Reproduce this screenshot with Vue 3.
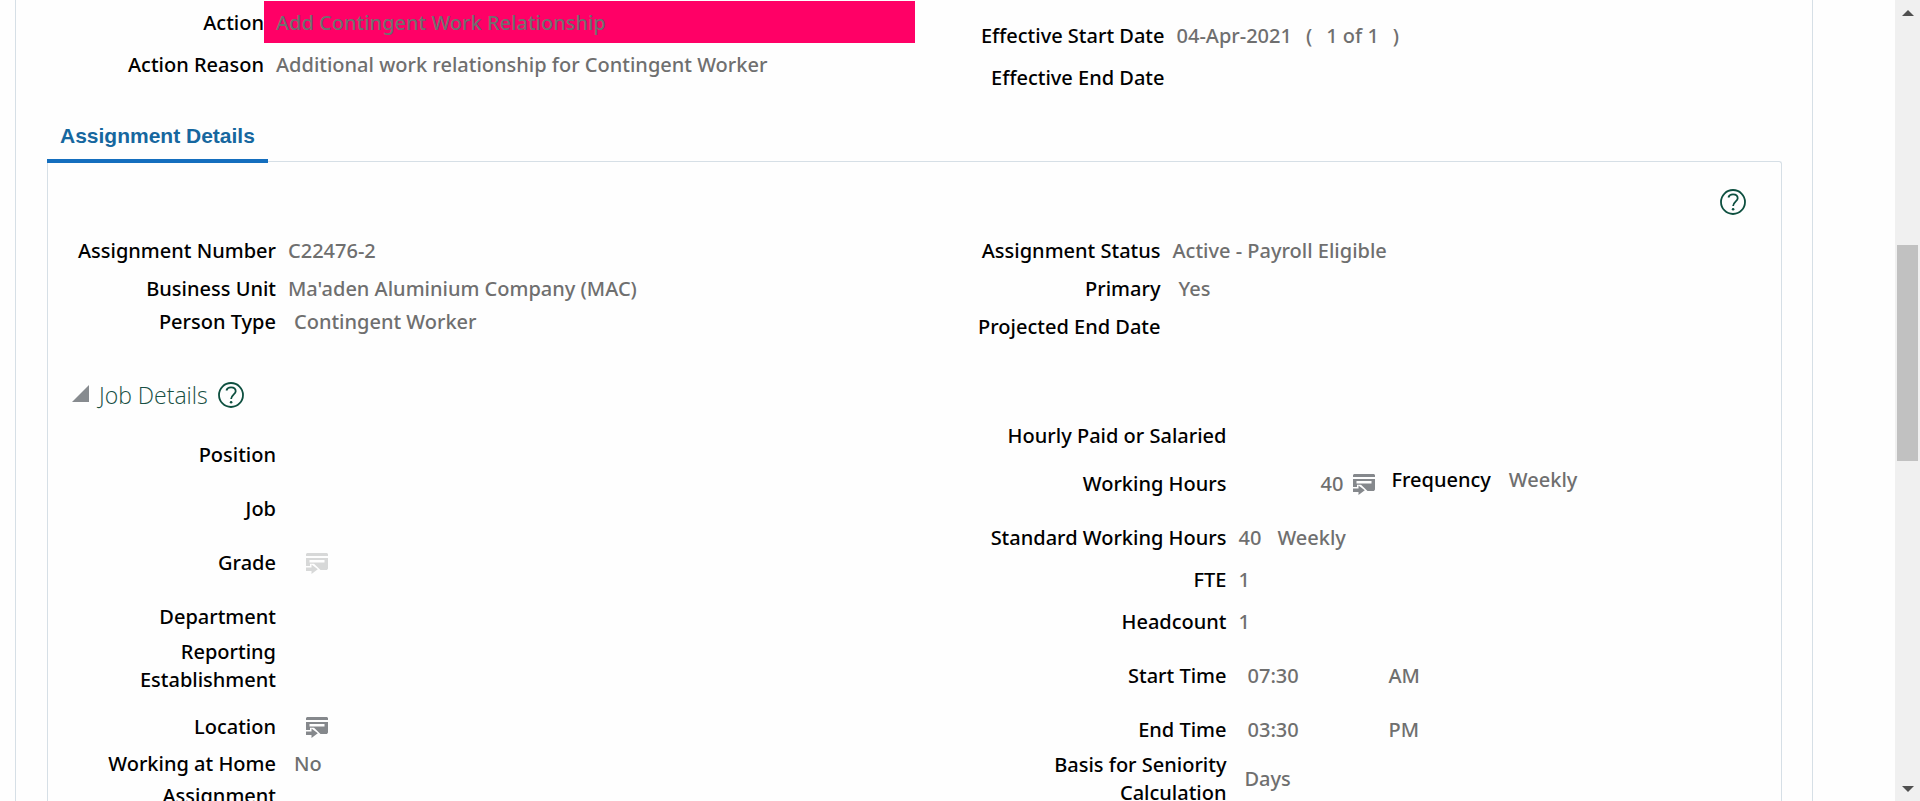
<script setup>
import { ref, h } from 'vue'

const expanded = ref(true)
const thumb = { top: 29.3, height: 28.8 }

const actionRows = [
  { label: 'Action', value: 'Add Contingent Work Relationship', marked: true },
  { label: 'Action Reason', value: 'Additional work relationship for Contingent Worker' },
]

const assignmentLeft = [
  { label: 'Assignment Number', value: 'C22476-2', size: 'normal' },
  { label: 'Business Unit', value: "Ma'aden Aluminium Company (MAC)", size: 'normal' },
  { label: 'Person Type', value: 'Contingent Worker', size: 'compact', inset: true },
]

const assignmentRight = [
  { label: 'Assignment Status', value: 'Active - Payroll Eligible' },
  { label: 'Primary', value: 'Yes', inset: true },
  { label: 'Projected End Date', value: '' },
]

const jobLeft = [
  { label: 'Position', gap: true },
  { label: 'Job', gap: true },
  { label: 'Grade', icon: 'disabled', gap: true },
  { label: 'Department' },
  { label: 'Reporting Establishment', gap: true },
  { label: 'Location', icon: 'active' },
  { label: 'Working at Home', value: 'No', tight: true },
  { label: 'Assignment', tight: true },
]

const HelpIcon = () =>
  h('svg', { width: 26, height: 26, viewBox: '0 0 26 26', fill: 'none', stroke: '#0d4f3f', 'aria-hidden': 'true' }, [
    h('circle', { cx: 13, cy: 13, r: 12, 'stroke-width': 1.8 }),
    h('path', { d: 'M8.4 8.4C9 6.400 10.700 5.300 13 5.300C15.800 5.300 17.700 6.900 17.700 9.200C17.700 12.500 13.100 13 13.100 17', 'stroke-width': 1.8 }),
    h('circle', { cx: 13.1, cy: 20.2, r: 1.3, fill: '#0d4f3f', stroke: 'none' }),
  ])

const DetailIcon = () =>
  h('svg', { width: 22, height: 21, viewBox: '0 0 22 21', fill: 'currentColor', 'aria-hidden': 'true' }, [
    h('path', { d: 'M1 0H21L22 1V3H0V1Z' }),
    h('path', { d: 'M0 5H22V15.500L21 17H14.500L8 10.800H4V13H0ZM3.500 7V9.500H18.500V7Z', 'fill-rule': 'evenodd' }),
    h('path', { d: 'M0 14.500H5.500V11.500L11.800 16.200L5.500 21V18H0Z' }),
  ])
</script>

<template>
  <div class="viewport">
    <main class="content">
      <div class="sheet">
        <section class="columns summary">
          <dl class="fields action-fields">
            <div v-for="row in actionRows" :key="row.label" class="row" :class="{ marked: row.marked }">
              <dt>{{ row.label }}</dt>
              <dd>{{ row.value }}</dd>
            </div>
          </dl>
          <dl class="fields effective-fields">
            <div class="row">
              <dt>Effective Start Date</dt>
              <dd class="dates"><span>04-Apr-2021</span><span>(</span><span>1 of 1</span><span>)</span></dd>
            </div>
            <div class="row"><dt>Effective End Date</dt><dd></dd></div>
          </dl>
        </section>

        <nav class="tabs" role="tablist">
          <button id="details-tab" class="tab" role="tab" aria-selected="true" aria-controls="details">Assignment Details</button>
        </nav>

        <section id="details" class="panel" role="tabpanel" aria-labelledby="details-tab">
          <div class="toolbar">
            <button class="plain" aria-label="Help"><HelpIcon /></button>
          </div>

          <div class="columns">
            <dl class="fields assignment-left">
              <div v-for="row in assignmentLeft" :key="row.label" class="row" :class="row.size">
                <dt>{{ row.label }}</dt>
                <dd :class="{ inset: row.inset }">{{ row.value }}</dd>
              </div>
            </dl>
            <dl class="fields assignment-right">
              <div v-for="row in assignmentRight" :key="row.label" class="row normal">
                <dt>{{ row.label }}</dt>
                <dd :class="{ inset: row.inset }">{{ row.value }}</dd>
              </div>
            </dl>
          </div>

          <div class="columns job">
            <div>
              <header class="section-head">
                <button class="plain toggle" aria-label="Toggle Job Details" :aria-expanded="expanded" @click="expanded = !expanded">
                  <svg width="17" height="17" viewBox="0 0 17 17" aria-hidden="true"><path d="M17 0V17H0Z" fill="#878b8f" /></svg>
                </button>
                <h2>Job Details</h2>
                <button class="plain" aria-label="Job Details help"><HelpIcon /></button>
              </header>
              <dl v-if="expanded" class="fields job-left">
                <div v-for="row in jobLeft" :key="row.label" class="row" :class="{ tight: row.tight, gap: row.gap }">
                  <dt>{{ row.label }}</dt>
                  <dd class="inset">
                    <button v-if="row.icon" class="plain detail" :disabled="row.icon === 'disabled'" :aria-label="row.label + ' details'"><DetailIcon /></button>
                    <template v-else>{{ row.value }}</template>
                  </dd>
                </div>
              </dl>
            </div>
            <dl v-if="expanded" class="fields job-right">
              <div class="row small-gap"><dt>Hourly Paid or Salaried</dt><dd></dd></div>
              <div class="row gap">
                <dt>Working Hours</dt>
                <dd class="hours">
                  <span class="amount">40</span>
                  <button class="plain" aria-label="Working hours details"><DetailIcon /></button>
                  <span class="frequency"><span class="name">Frequency</span><span>Weekly</span></span>
                </dd>
              </div>
              <div class="row"><dt>Standard Working Hours</dt><dd class="standard"><span>40</span><span>Weekly</span></dd></div>
              <div class="row"><dt>FTE</dt><dd>1</dd></div>
              <div class="row gap"><dt>Headcount</dt><dd>1</dd></div>
              <div class="row gap"><dt>Start Time</dt><dd class="time"><span>07:30</span><span>AM</span></dd></div>
              <div class="row"><dt>End Time</dt><dd class="time"><span>03:30</span><span>PM</span></dd></div>
              <div class="row"><dt>Basis for Seniority Calculation</dt><dd class="inset">Days</dd></div>
            </dl>
          </div>
        </section>
      </div>
    </main>

    <div class="scrollbar">
      <button class="arrow" aria-label="Scroll up"><svg width="12" height="6" viewBox="0 0 12 6"><path d="M0 6L6 0L12 6Z" fill="#505050" /></svg></button>
      <div class="track">
        <div class="thumb" :style="{ top: thumb.top + '%', height: thumb.height + '%' }"></div>
      </div>
      <button class="arrow" aria-label="Scroll down"><svg width="12" height="6" viewBox="0 0 12 6"><path d="M0 0H12L6 6Z" fill="#505050" /></svg></button>
    </div>
  </div>
</template>

<style>
body {
  margin: 0;
  background: #fefefe;
}
</style>

<style scoped>
.viewport {
  display: flex;
  height: 100vh;
  overflow: hidden;
  font-family: "Noto Sans", "Open Sans", sans-serif;
  font-size: 20px;
  font-weight: 500;
  line-height: 28px;
  color: #000;
}
.content {
  flex: 1;
  min-width: 0;
  padding: 0 82px 0 15px;
}
.sheet {
  border: solid #d6dfe6;
  border-width: 0 1px;
  padding: 0 30px 0 31px;
}
.columns {
  display: grid;
  grid-template-columns: 1fr 1fr;
}
.fields {
  --label: 228px;
  margin: 0;
}
.row {
  display: grid;
  grid-template-columns: var(--label) minmax(0, 1fr);
  min-height: 42px;
  align-items: center;
}
.row.normal {
  min-height: 38px;
}
.row.tight {
  min-height: 32px;
}
.row.compact {
  min-height: 28px;
}
.row.gap {
  margin-bottom: 12px;
}
.row.small-gap {
  margin-bottom: 6px;
}
dt {
  text-align: right;
}
dd {
  display: flex;
  align-items: center;
  margin: 0;
  padding-left: 12px;
  color: #6f6f6f;
}
dd.inset {
  padding-left: 18px;
}
.summary {
  padding-top: 1px;
}
.action-fields {
  --label: 217px;
}
.action-fields dt,
.action-fields dd {
  padding-top: 2px;
}
.marked dd {
  align-self: stretch;
  background: #ff0066;
}
.effective-fields {
  --label: 250px;
  padding-top: 14px;
}
.dates {
  gap: 14px;
}
.tabs {
  display: flex;
  margin-top: 16px;
}
.tab {
  height: 48px;
  padding: 0 13px 2px;
  border: 0;
  border-bottom: 4px solid #146ebe;
  background: none;
  color: #16679f;
  font: bold 21px/42px "Liberation Sans", Arial, sans-serif;
  position: relative;
}
.panel {
  margin-top: -2px;
  border: solid #d6dfe6;
  border-width: 1px 1px 0;
  border-radius: 0 3px 0 0;
}
.toolbar {
  display: flex;
  justify-content: flex-end;
  padding: 27px 35px 17px;
}
.plain {
  display: flex;
  padding: 0;
  border: 0;
  background: none;
  color: #85888c;
}
.plain:disabled {
  color: #d7d8d8;
}
.assignment-right {
  --label: 246px;
}
.section-head {
  display: flex;
  align-items: center;
  gap: 10px;
  height: 40px;
  padding: 0 24px;
}
.toggle {
  padding-bottom: 4px;
}
h2 {
  margin: 0;
  color: #174f43;
  font-family: "Open Sans", "Noto Sans", sans-serif;
  font-size: 23px;
  font-weight: 300;
}
.job {
  margin-top: 29px;
}
.job-left {
  margin-top: 19px;
}
.job-left dt {
  padding-left: 30px;
}
.job-right {
  --label: 312px;
  padding-top: 40px;
}
.job-right dt {
  padding-left: 60px;
}
.detail {
  margin-left: 12px;
}
.hours {
  padding-left: 94px;
  gap: 10px;
}
.frequency {
  display: flex;
  gap: 18px;
  padding: 0 0 8px 6px;
}
.name {
  color: #000;
}
.standard {
  gap: 16px;
}
.time {
  display: grid;
  grid-template-columns: 141px 1fr;
  padding-left: 21px;
}
.scrollbar {
  display: flex;
  flex-direction: column;
  width: 25px;
  background: #f0f0f0;
}
.arrow {
  display: flex;
  align-items: center;
  justify-content: center;
  height: 25px;
  padding: 0;
  border: 0;
  background: none;
}
.track {
  position: relative;
  flex: 1;
}
.thumb {
  position: absolute;
  left: 2px;
  right: 2px;
  background: #c1c1c1;
}
</style>
